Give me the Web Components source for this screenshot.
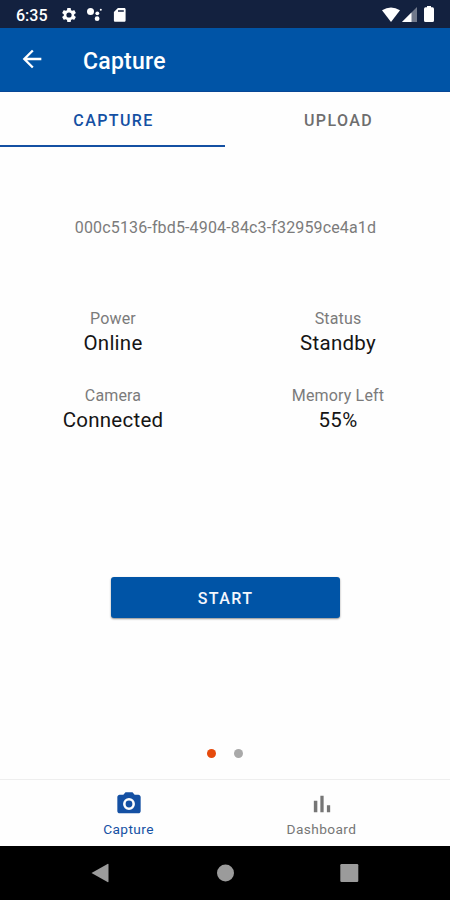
<!DOCTYPE html>
<html lang="en">
<head>
<meta charset="utf-8">
<title>Capture</title>
<style>
    body {
        margin: 0;
        width: 450px;
        height: 900px;
        overflow: hidden;
        font-family: Roboto, sans-serif;
        --primary: #0054a6;
        --accent: #1450a3;
        --muted: #7b7b7b;
    }
</style>
</head>
<body>
<capture-app></capture-app>

<script>
class StatusBar extends HTMLElement {
    constructor() {
        super();
        this.attachShadow({ mode: "open" });
    }

    connectedCallback() {
        this.shadowRoot.innerHTML = `
            <style>
                :host {
                    display: flex;
                    flex: none;
                    box-sizing: border-box;
                    height: 28px;
                    padding: 1px 16px 0;
                    align-items: center;
                    justify-content: space-between;
                    background: #13213f;
                    color: #fff;
                    fill: #fff;
                }
                div { display: flex; align-items: center; }
                span {
                    width: 45px;
                    padding-top: 1px;
                    font-size: 16px;
                    font-weight: 500;
                    line-height: 19px;
                }
                svg { display: block; }
                .gear { margin-right: 9px; }
                .dots { margin-right: 10px; }
                .signal { margin: 0 7px 0 2px; }
            </style>
            <div>
                <span>6:35</span>
                <svg class="gear" width="16" height="16" viewBox="1 1 22 22"><path d="M19.14 12.94c.04-.3.06-.61.06-.94 0-.32-.02-.64-.07-.94l2.03-1.58a.49.49 0 0 0 .12-.61l-1.92-3.32a.488.488 0 0 0-.59-.22l-2.39.96c-.5-.38-1.03-.7-1.62-.94l-.36-2.54a.484.484 0 0 0-.48-.41h-3.84c-.24 0-.43.17-.47.41l-.36 2.54c-.59.24-1.13.57-1.62.94l-2.39-.96c-.22-.08-.47 0-.59.22L2.74 8.87c-.12.21-.08.47.12.61l2.03 1.58c-.05.3-.09.63-.09.94s.02.64.07.94l-2.03 1.58a.49.49 0 0 0-.12.61l1.92 3.32c.12.22.37.29.59.22l2.39-.96c.5.38 1.03.7 1.62.94l.36 2.54c.05.24.24.41.48.41h3.84c.24 0 .44-.17.47-.41l.36-2.54c.59-.24 1.13-.56 1.62-.94l2.39.96c.22.08.47 0 .59-.22l1.92-3.32c.12-.22.07-.47-.12-.61l-2.01-1.58zM12 15.6A3.6 3.6 0 1 1 12 8.4a3.6 3.6 0 0 1 0 7.2z"/></svg>
                <svg class="dots" width="17" height="16" viewBox="0 0 17 16"><circle cx="4.500" cy="4.500" r="3.500"/><circle cx="11.300" cy="6.300" r="1.900"/><circle cx="11.100" cy="11.700" r="2.400"/><circle cx="14.800" cy="2.800" r="1"/></svg>
                <svg width="13" height="16" viewBox="0 0 13 16"><path fill-rule="evenodd" d="M4.900 1h6.300c.8 0 1.400.6 1.400 1.400v11c0 .8-.6 1.400-1.400 1.400H2.300c-.8 0-1.400-.6-1.400-1.400V5zM5 3.200v1.500h5.800V3.200z"/></svg>
            </div>
            <div>
                <svg width="18" height="16" viewBox="0 0 18 16"><path d="M0 3.2Q9-2.2 18 3.2L9 15z"/></svg>
                <svg class="signal" width="15" height="16" viewBox="0 0 15 16"><path opacity=".4" d="M15 0v15H0z"/><path d="M9.5 5.5V15H0z"/></svg>
                <svg width="10" height="17" viewBox="0 0 10 17"><path d="M3 0h4v1.2h1.500Q10 1.400 10 3v11.500q0 1.500-1.500 1.500h-7Q0 16 0 14.500V3q0-1.600 1.500-1.800H3z"/></svg>
            </div>
        `
    }
}

class TopBar extends HTMLElement {
    constructor() {
        super();
        this.attachShadow({ mode: "open" });
    }

    connectedCallback() {
        this.shadowRoot.innerHTML = `
            <style>
                :host {
                    display: flex;
                    flex: none;
                    box-sizing: border-box;
                    height: 64px;
                    padding: 4px 18px 0;
                    align-items: center;
                    background: var(--primary);
                    border-bottom: 1px solid #074796;
                    color: #fff;
                }
                svg { margin: -5px 37px 0 0; fill: #fff; }
                h1 {
                    margin: 0;
                    font-size: 23px;
                    font-weight: 500;
                    line-height: 28px;
                    letter-spacing: .25px;
                }
            </style>
            <svg width="28" height="28" viewBox="0 0 24 24"><path d="M20 11H7.830l5.590-5.590L12 4l-8 8 8 8 1.410-1.410L7.830 13H20z"/></svg>
            <h1><slot></slot></h1>
        `
    }
}

class TabItem extends HTMLElement {
    constructor() {
        super();
        this.attachShadow({ mode: "open" });
    }

    connectedCallback() {
        this.shadowRoot.innerHTML = `
            <style>
                :host {
                    display: flex;
                    flex: 1;
                    box-sizing: border-box;
                    height: 55px;
                    align-items: center;
                    justify-content: center;
                    border-bottom: 2px solid transparent;
                    color: #6e6e6e;
                    font-size: 16px;
                    font-weight: 500;
                    letter-spacing: 1.4px;
                }
                :host([selected]) {
                    color: var(--accent);
                    border-bottom-color: var(--accent);
                }
                span { padding: 4px 0 0 2px; }
            </style>
            <span><slot></slot></span>
        `
    }
}

class StatItem extends HTMLElement {
    constructor() {
        super();
        this.attachShadow({ mode: "open" });
    }

    connectedCallback() {
        this.shadowRoot.innerHTML = `
            <style>
                :host { display: block; padding-left: 1px; text-align: center; }
                .label {
                    margin: 1px 0 -1px;
                    color: var(--muted);
                    font-size: 16px;
                    line-height: 22px;
                    letter-spacing: .15px;
                }
                .value {
                    color: #151515;
                    font-size: 20.5px;
                    line-height: 28px;
                    letter-spacing: .25px;
                }
            </style>
            <div class="label">${this.getAttribute('label')}</div>
            <div class="value"><slot></slot></div>
        `
    }
}

class StartButton extends HTMLElement {
    constructor() {
        super();
        this.attachShadow({ mode: "open" });
    }

    connectedCallback() {
        this.shadowRoot.innerHTML = `
            <style>
                :host { display: block; }
                button {
                    display: block;
                    width: 229px;
                    height: 41px;
                    padding: 2px 0 0 1px;
                    border: 0;
                    border-radius: 3px;
                    background: var(--primary);
                    box-shadow: 0 1px 2px rgba(0, 0, 0, .45);
                    color: #f4f7fd;
                    font: 500 16px Roboto, sans-serif;
                    letter-spacing: 1.43px;
                }
            </style>
            <button><slot></slot></button>
        `
    }
}

class PageDots extends HTMLElement {
    constructor() {
        super();
        this.attachShadow({ mode: "open" });
    }

    connectedCallback() {
        this.shadowRoot.innerHTML = `
            <style>
                :host { display: flex; gap: 18px; }
                i {
                    width: 9px;
                    height: 9px;
                    border-radius: 50%;
                    background: #a9a9a9;
                }
                .current { background: #e64a0c; }
            </style>
            <i class="current"></i><i></i>
        `
    }
}

class NavItem extends HTMLElement {
    constructor() {
        super();
        this.attachShadow({ mode: "open" });
    }

    connectedCallback() {
        this.shadowRoot.innerHTML = `
            <style>
                :host {
                    display: flex;
                    width: 193px;
                    flex-direction: column;
                    align-items: center;
                    color: #767676;
                    fill: currentColor;
                    font-size: 13.7px;
                    line-height: 18px;
                    letter-spacing: .4px;
                }
                :host([selected]) { color: var(--accent); }
                .icon { height: 28px; margin-bottom: 2px; }
            </style>
            <div class="icon"><slot name="icon"></slot></div>
            <div><slot></slot></div>
        `
    }
}

class SystemNav extends HTMLElement {
    constructor() {
        super();
        this.attachShadow({ mode: "open" });
    }

    connectedCallback() {
        this.shadowRoot.innerHTML = `
            <style>
                :host {
                    display: flex;
                    flex: none;
                    height: 54px;
                    align-items: center;
                    justify-content: center;
                    gap: 104px;
                    background: #000;
                    fill: #9b9b9b;
                }
            </style>
            <svg width="20" height="20" viewBox="0 0 20 20"><path d="M.500 10 16.500 1q1-.5 1 .7v16.600q0 1.200-1 .7z"/></svg>
            <svg width="20" height="20" viewBox="0 0 20 20"><circle cx="10.500" cy="10" r="8.500"/></svg>
            <svg width="20" height="20" viewBox="0 0 20 20"><rect x="1.300" y="1" width="18" height="18" rx="1.200"/></svg>
        `
    }
}

class CaptureApp extends HTMLElement {
    constructor() {
        super();
        this.attachShadow({ mode: "open" });
    }

    connectedCallback() {
        this.shadowRoot.innerHTML = `
            <style>
                :host {
                    display: flex;
                    flex-direction: column;
                    height: 900px;
                    background: #fefefe;
                }
                .tabs { display: flex; }
                main {
                    display: flex;
                    flex: 1;
                    flex-direction: column;
                    align-items: center;
                }
                .device {
                    margin: 70px 0 0;
                    padding-left: 1px;
                    color: var(--muted);
                    font-size: 16px;
                    line-height: 22px;
                    letter-spacing: .15px;
                }
                .stats {
                    display: grid;
                    width: 450px;
                    margin-top: 68px;
                    grid-template-columns: 1fr 1fr;
                    row-gap: 27px;
                }
                start-button { margin-top: 143px; }
                page-dots { margin-top: 131px; }
                nav {
                    display: flex;
                    box-sizing: border-box;
                    height: 67px;
                    padding-top: 10px;
                    justify-content: center;
                    border-top: 1px solid #eee;
                }
                nav svg { display: block; }
            </style>
            <status-bar></status-bar>
            <top-bar>Capture</top-bar>
            <div class="tabs">
                <tab-item selected>CAPTURE</tab-item>
                <tab-item>UPLOAD</tab-item>
            </div>
            <main>
                <p class="device">000c5136-fbd5-4904-84c3-f32959ce4a1d</p>
                <div class="stats">
                    <stat-item label="Power">Online</stat-item>
                    <stat-item label="Status">Standby</stat-item>
                    <stat-item label="Camera">Connected</stat-item>
                    <stat-item label="Memory Left">55%</stat-item>
                </div>
                <start-button>START</start-button>
                <page-dots></page-dots>
            </main>
            <nav>
                <nav-item selected>
                    <svg slot="icon" width="28" height="28" viewBox="0 0 24 24"><path fill-rule="evenodd" d="M9 2 7.170 4H4c-1.100 0-2 .9-2 2v12c0 1.100.9 2 2 2h16c1.100 0 2-.9 2-2V6c0-1.100-.9-2-2-2h-3.170L15 2zm3 15.100a5.100 5.100 0 1 1 0-10.200 5.100 5.100 0 0 1 0 10.200zm0-2.200a2.900 2.900 0 1 0 0-5.800 2.900 2.900 0 0 0 0 5.800z"/></svg>
                    Capture
                </nav-item>
                <nav-item>
                    <svg slot="icon" width="28" height="28" viewBox="0 0 24 24"><path d="M5 9.200h3V19H5zM10.600 5h2.800v14h-2.800zm5.600 8H19v6h-2.800z"/></svg>
                    Dashboard
                </nav-item>
            </nav>
            <system-nav></system-nav>
        `
    }
}

customElements.define("status-bar", StatusBar);
customElements.define("top-bar", TopBar);
customElements.define("tab-item", TabItem);
customElements.define("stat-item", StatItem);
customElements.define("start-button", StartButton);
customElements.define("page-dots", PageDots);
customElements.define("nav-item", NavItem);
customElements.define("system-nav", SystemNav);
customElements.define("capture-app", CaptureApp);
</script>
</body>
</html>
